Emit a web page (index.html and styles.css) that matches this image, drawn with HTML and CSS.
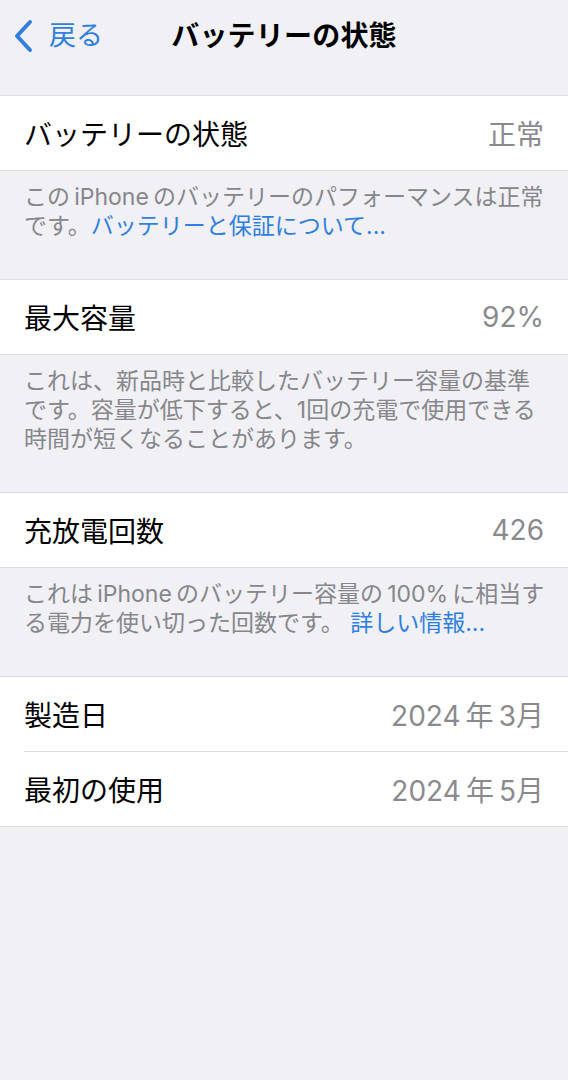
FILE: index.html
```html
<!DOCTYPE html>
<html lang="ja">
<head>
<meta charset="utf-8">
<title>バッテリーの状態</title>
<link rel="stylesheet" href="styles.css">
</head>
<body>
<div class="screen">
  <header class="nav">
    <a class="back" href="#">
      <svg class="chev" width="22" height="34" viewBox="0 0 22 34"><path d="M18 3 L5 17 L18 31" fill="none" stroke="currentColor" stroke-width="4" stroke-linecap="round" stroke-linejoin="round"/></svg>
      <span>戻る</span>
    </a>
    <h1 class="title">バッテリーの状態</h1>
  </header>

  <section class="group g1">
    <div class="row"><span class="label">バッテリーの状態</span><span class="value">正常</span></div>
  </section>
  <p class="footer">この&thinsp;iPhone&thinsp;のバッテリーのパフォーマンスは正常です。<a href="#">バッテリーと保証について...</a></p>

  <section class="group">
    <div class="row"><span class="label">最大容量</span><span class="value">92%</span></div>
  </section>
  <p class="footer">これは、新品時と比較したバッテリー容量の基準です。容量が低下すると、1回の充電で使用できる時間が短くなることがあります。</p>

  <section class="group">
    <div class="row"><span class="label">充放電回数</span><span class="value">426</span></div>
  </section>
  <p class="footer">これは&thinsp;iPhone&thinsp;のバッテリー容量の&thinsp;100%&thinsp;に相当する電力を使い切った回数です。&nbsp;<a href="#">詳しい情報...</a></p>

  <section class="group">
    <div class="row"><span class="label">製造日</span><span class="value">2024&thinsp;年&thinsp;3月</span></div>
    <div class="row"><span class="label">最初の使用</span><span class="value">2024&thinsp;年&thinsp;5月</span></div>
  </section>
</div>
</body>
</html>
```

FILE: styles.css
```css
html, body {
  margin: 0;
  padding: 0;
  background: #f0f0f5;
}

body {
  font-family: "Inter", "Noto Sans CJK JP", sans-serif;
  color: #000;
  width: 568px;
  min-height: 1080px;
}

.screen {
  display: flex;
  flex-direction: column;
  padding-bottom: 40px;
}

.nav {
  position: relative;
  height: 72px;
  display: flex;
  align-items: center;
  justify-content: center;
  margin-bottom: 23px;
}

.back {
  position: absolute;
  left: 12px;
  top: 19px;
  display: flex;
  align-items: center;
  gap: 15px;
  color: #2f7fe0;
  text-decoration: none;
  font-size: 27px;
}

.back .chev {
  display: block;
}

.back span {
  line-height: 34px;
}

.title {
  margin: 0;
  font-size: 28px;
  font-weight: 700;
  line-height: 36px;
  letter-spacing: 0.2px;
}

.group {
  background: #fff;
  border-top: 1px solid #dcdce0;
  border-bottom: 1px solid #dcdce0;
}

.row {
  height: 74px;
  display: flex;
  align-items: center;
  justify-content: space-between;
  padding: 0 24px;
  font-size: 28px;
}

.row + .row {
  border-top: 1px solid #dcdce0;
  margin-left: 24px;
  padding-left: 0;
}

.label {
  color: #000;
}

.value {
  color: #8a8a8e;
}

.footer {
  margin: 0;
  padding: 12px 22px 38px 24px;
  font-size: 23px;
  line-height: 29px;
  color: #86868b;
}

.footer a {
  color: #2f7fe0;
  text-decoration: none;
}
```
